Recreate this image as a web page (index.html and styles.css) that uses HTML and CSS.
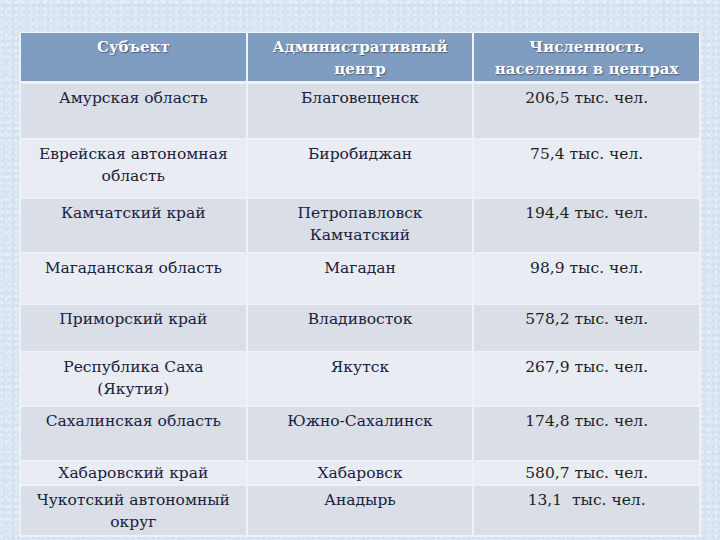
FILE: index.html
```html
<!DOCTYPE html>
<html lang="ru">
<head>
<meta charset="utf-8">
<title>Дальний Восток</title>
<link rel="stylesheet" href="styles.css">
</head>
<body>
<div class="slide">
  <table class="data">
    <thead>
      <tr class="h-head">
        <th>Субъект</th>
        <th>Административный<br>центр</th>
        <th>Численность<br>населения в центрах</th>
      </tr>
    </thead>
    <tbody>
      <tr class="dark h54"><td>Амурская область</td><td>Благовещенск</td><td class="num">206,5 тыс. чел.</td></tr>
      <tr class="light h57"><td>Еврейская автономная<br>область</td><td>Биробиджан</td><td class="num">75,4 тыс. чел.</td></tr>
      <tr class="dark h53"><td>Камчатский край</td><td>Петропавловск<br>Камчатский</td><td class="num">194,4 тыс. чел.</td></tr>
      <tr class="light h49"><td>Магаданская область</td><td>Магадан</td><td class="num">98,9 тыс. чел.</td></tr>
      <tr class="dark h46"><td>Приморский край</td><td>Владивосток</td><td class="num">578,2 тыс. чел.</td></tr>
      <tr class="light h52"><td>Республика Саха<br>(Якутия)</td><td>Якутск</td><td class="num">267,9 тыс. чел.</td></tr>
      <tr class="dark h53"><td>Сахалинская область</td><td>Южно-Сахалинск</td><td class="num">174,8 тыс. чел.</td></tr>
      <tr class="light h22"><td>Хабаровский край</td><td>Хабаровск</td><td class="num">580,7 тыс. чел.</td></tr>
      <tr class="dark h51"><td>Чукотский автономный<br>округ</td><td>Анадырь</td><td class="num">13,1&nbsp; тыс. чел.</td></tr>
    </tbody>
  </table>
</div>
</body>
</html>
```
FILE: styles.css
```css
html, body {
  margin: 0;
  padding: 0;
}
body {
  width: 720px;
  height: 540px;
  overflow: hidden;
  background-color: #d9e5f2;
  background-image:
    radial-gradient(circle at 30% 40%, rgba(255,255,255,0.35) 0 1px, transparent 2px),
    radial-gradient(circle at 70% 80%, rgba(190,208,230,0.35) 0 1px, transparent 2px),
    radial-gradient(circle at 50% 10%, rgba(255,255,255,0.25) 0 1.5px, transparent 3px);
  background-size: 7px 6px, 5px 7px, 13px 11px;
  font-family: "DejaVu Serif", "Liberation Serif", serif;
}
.slide {
  padding: 32px 19px 0 19px;
}
.data {
  width: 682px;
  border-collapse: collapse;
  table-layout: fixed;
  border: 1px solid #f2f5f9;
}
.data th,
.data td {
  vertical-align: top;
  text-align: center;
  padding: 3px 2px 0;
  font-size: 15.5px;
  line-height: 22px;
  border: 2px solid #eef2f7;
  border-top: 0;
}
.data th {
  background: #7f9cc1;
  color: #ffffff;
  font-weight: bold;
  font-size: 15px;
  text-shadow: 1px 1px 1px rgba(30, 40, 70, 0.5);
  border-bottom-width: 3px;
}
.data td {
  color: #1b2140;
}
.data td.num {
  color: #1e1e24;
}
.dark td { background: #d9dee7; }
.light td { background: #e9edf3; }

.h-head { height: 50px; }
.h54 { height: 56px; }
.h57 { height: 59px; }
.h53 { height: 55px; }
.h49 { height: 51px; }
.h46 { height: 48px; }
.h52 { height: 54px; }
.h51 { height: 51px; }
.h22 { height: 24px; }
.h22 td { padding-top: 0; }
```
